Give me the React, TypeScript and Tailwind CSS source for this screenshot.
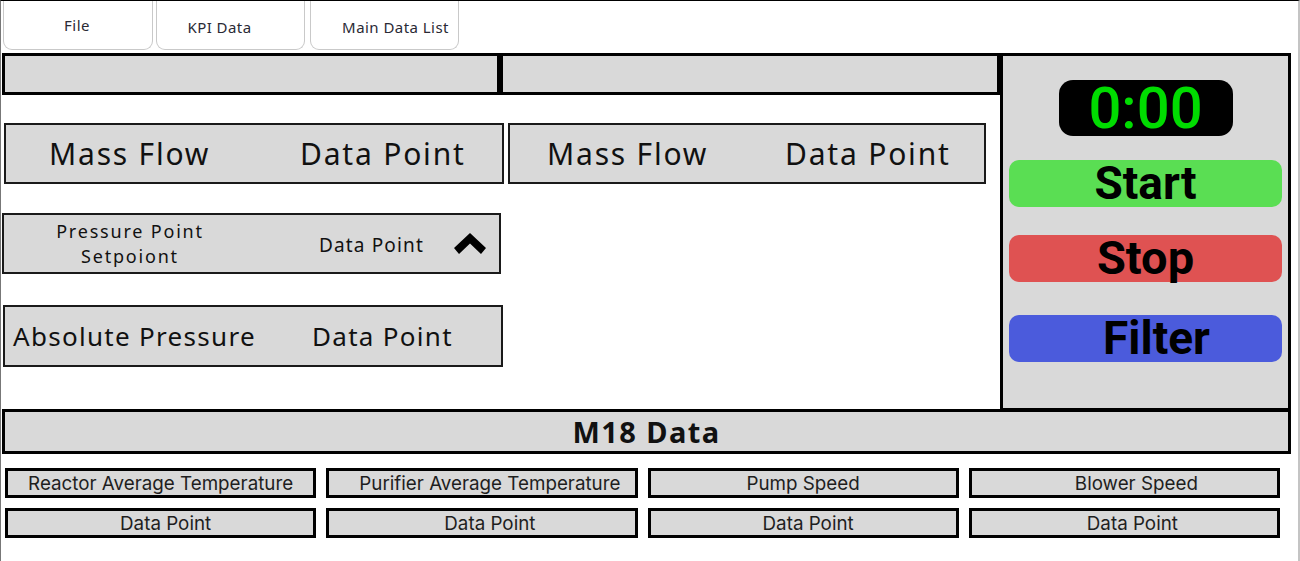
import React from 'react';

// Font stacks used across the dashboard.
const head = "font-['Noto_Sans',sans-serif]";
const roboto = "font-['Roboto',sans-serif]";
const inter = "font-['Inter',sans-serif]";

const tabs = [
  { label: 'File', cls: 'ml-[2px] w-[150px] pt-[13px] pr-[2px]' },
  { label: 'KPI Data', cls: 'ml-[3px] w-[149px] pt-[15px] pr-[22px]' },
  { label: 'Main Data List', cls: 'ml-[5px] w-[149px] pt-[15px] pl-[22px]' },
];

// label row, then value row; pl shifts mirror the off-centre text of the mockup
const m18 = [
  { text: 'Reactor Average Temperature', cls: '' },
  { text: 'Purifier Average Temperature', cls: 'pl-[16px]' },
  { text: 'Pump Speed', cls: '' },
  { text: 'Blower Speed', cls: 'pl-[24px]' },
  { text: 'Data Point', cls: 'pl-[10px]' },
  { text: 'Data Point', cls: 'pl-[16px]' },
  { text: 'Data Point', cls: 'pl-[10px]' },
  { text: 'Data Point', cls: 'pl-[16px]' },
];

const Chevron = () => (
  <svg width="32" height="22" viewBox="0 0 32 22">
    <polygon points="16,0 32,15 27,21 16,10.5 5,21 0,15" fill="#000" />
  </svg>
);

export default function App() {
  return (
    <div className="w-[1300px] h-[561px] bg-white border-t border-t-black border-l border-l-[#777] border-r-2 border-r-[#c4c4c4] overflow-hidden">
      {/* Tabs */}
      <div className="flex h-[52px]">
        {tabs.map((t) => (
          <div
            key={t.label}
            className={`h-[49px] bg-white border border-t-0 border-[#c9c9c9] rounded-b-[9px] text-center text-[15px] tracking-[0.03em] text-[#2a2a35] ${head} ${t.cls}`}
          >
            {t.label}
          </div>
        ))}
      </div>

      {/* Main area */}
      <div className="flex ml-[1px]">
        <div className="w-[998px]">
          <div className="flex h-[42px]">
            <div className="w-[498px] border-[3px] border-black bg-[#d9d9d9]" />
            <div className="w-[500px] border-[3px] border-black bg-[#d9d9d9]" />
          </div>

          <div className="flex">
            <div className="w-[506px]">
              <div className={`ml-[2px] mt-[28px] w-[500px] h-[61px] border-2 border-[#1a1a1a] bg-[#d9d9d9] flex items-center text-[30px] tracking-[0.06em] text-[#111] ${head}`}>
                <span className="w-[294px] pl-[43px]">Mass Flow</span>
                <span>Data Point</span>
              </div>
              <div className={`mt-[29px] w-[499px] h-[61px] border-2 border-[#1a1a1a] bg-[#d9d9d9] flex items-center text-[19px] tracking-[0.06em] text-[#111] ${head}`}>
                <div className="w-[252px] text-center text-[18px] tracking-[0.1em] leading-[25px]">
                  <div>Pressure Point</div>
                  <div>Setpoiont</div>
                </div>
                <span className="w-[63px]" />
                <span className="w-[135px] pt-[3px]">Data Point</span>
                <Chevron />
              </div>
              <div className={`ml-[1px] mt-[31px] w-[500px] h-[62px] border-2 border-[#1a1a1a] bg-[#d9d9d9] flex items-center text-[26px] tracking-[0.05em] text-[#111] ${head}`}>
                <span className="w-[307px] pl-[8px]">Absolute Pressure</span>
                <span>Data Point</span>
              </div>
            </div>
            <div className={`mt-[28px] w-[478px] h-[61px] border-2 border-[#1a1a1a] bg-[#d9d9d9] flex items-center text-[30px] tracking-[0.06em] text-[#111] ${head}`}>
              <span className="w-[275px] pl-[37px]">Mass Flow</span>
              <span>Data Point</span>
            </div>
          </div>
        </div>

        {/* Control panel */}
        <div className={`w-[291px] h-[358px] border-[3px] border-black bg-[#d9d9d9] flex flex-col items-center ${roboto}`}>
          <div className="mt-[24px] w-[174px] h-[56px] rounded-[14px] bg-black flex items-center justify-center text-[58px] leading-none font-medium text-[#00dc00]">
            0:00
          </div>
          <div className="mt-[24px] w-[273px] h-[47px] rounded-[10px] bg-[#5ade53] flex items-center justify-center text-[46px] font-bold text-black">
            Start
          </div>
          <div className="mt-[28px] w-[273px] h-[47px] rounded-[10px] bg-[#df5252] flex items-center justify-center text-[47px] font-bold text-black">
            Stop
          </div>
          <div className="mt-[33px] w-[273px] h-[47px] rounded-[10px] bg-[#4b5bdc] flex items-center justify-center pl-[22px] text-[46px] font-bold text-black">
            Filter
          </div>
        </div>
      </div>

      {/* M18 section */}
      <div className={`ml-[1px] -mt-[2px] w-[1289px] h-[45px] border-[3px] border-black bg-[#d9d9d9] flex items-center justify-center text-[29px] tracking-[0.05em] font-bold text-[#111] ${head}`}>
        M18 Data
      </div>
      <div className="ml-[4px] mt-[14px] w-[1275px] grid grid-cols-4 gap-x-[10px] gap-y-[10px]">
        {m18.map((m, i) => (
          <div
            key={i}
            className={`h-[30px] border-[3px] border-black bg-[#d9d9d9] flex items-center justify-center pt-[2px] text-[18.8px] text-[#1e1e1e] ${inter} ${m.cls}`}
          >
            {m.text}
          </div>
        ))}
      </div>
    </div>
  );
}
